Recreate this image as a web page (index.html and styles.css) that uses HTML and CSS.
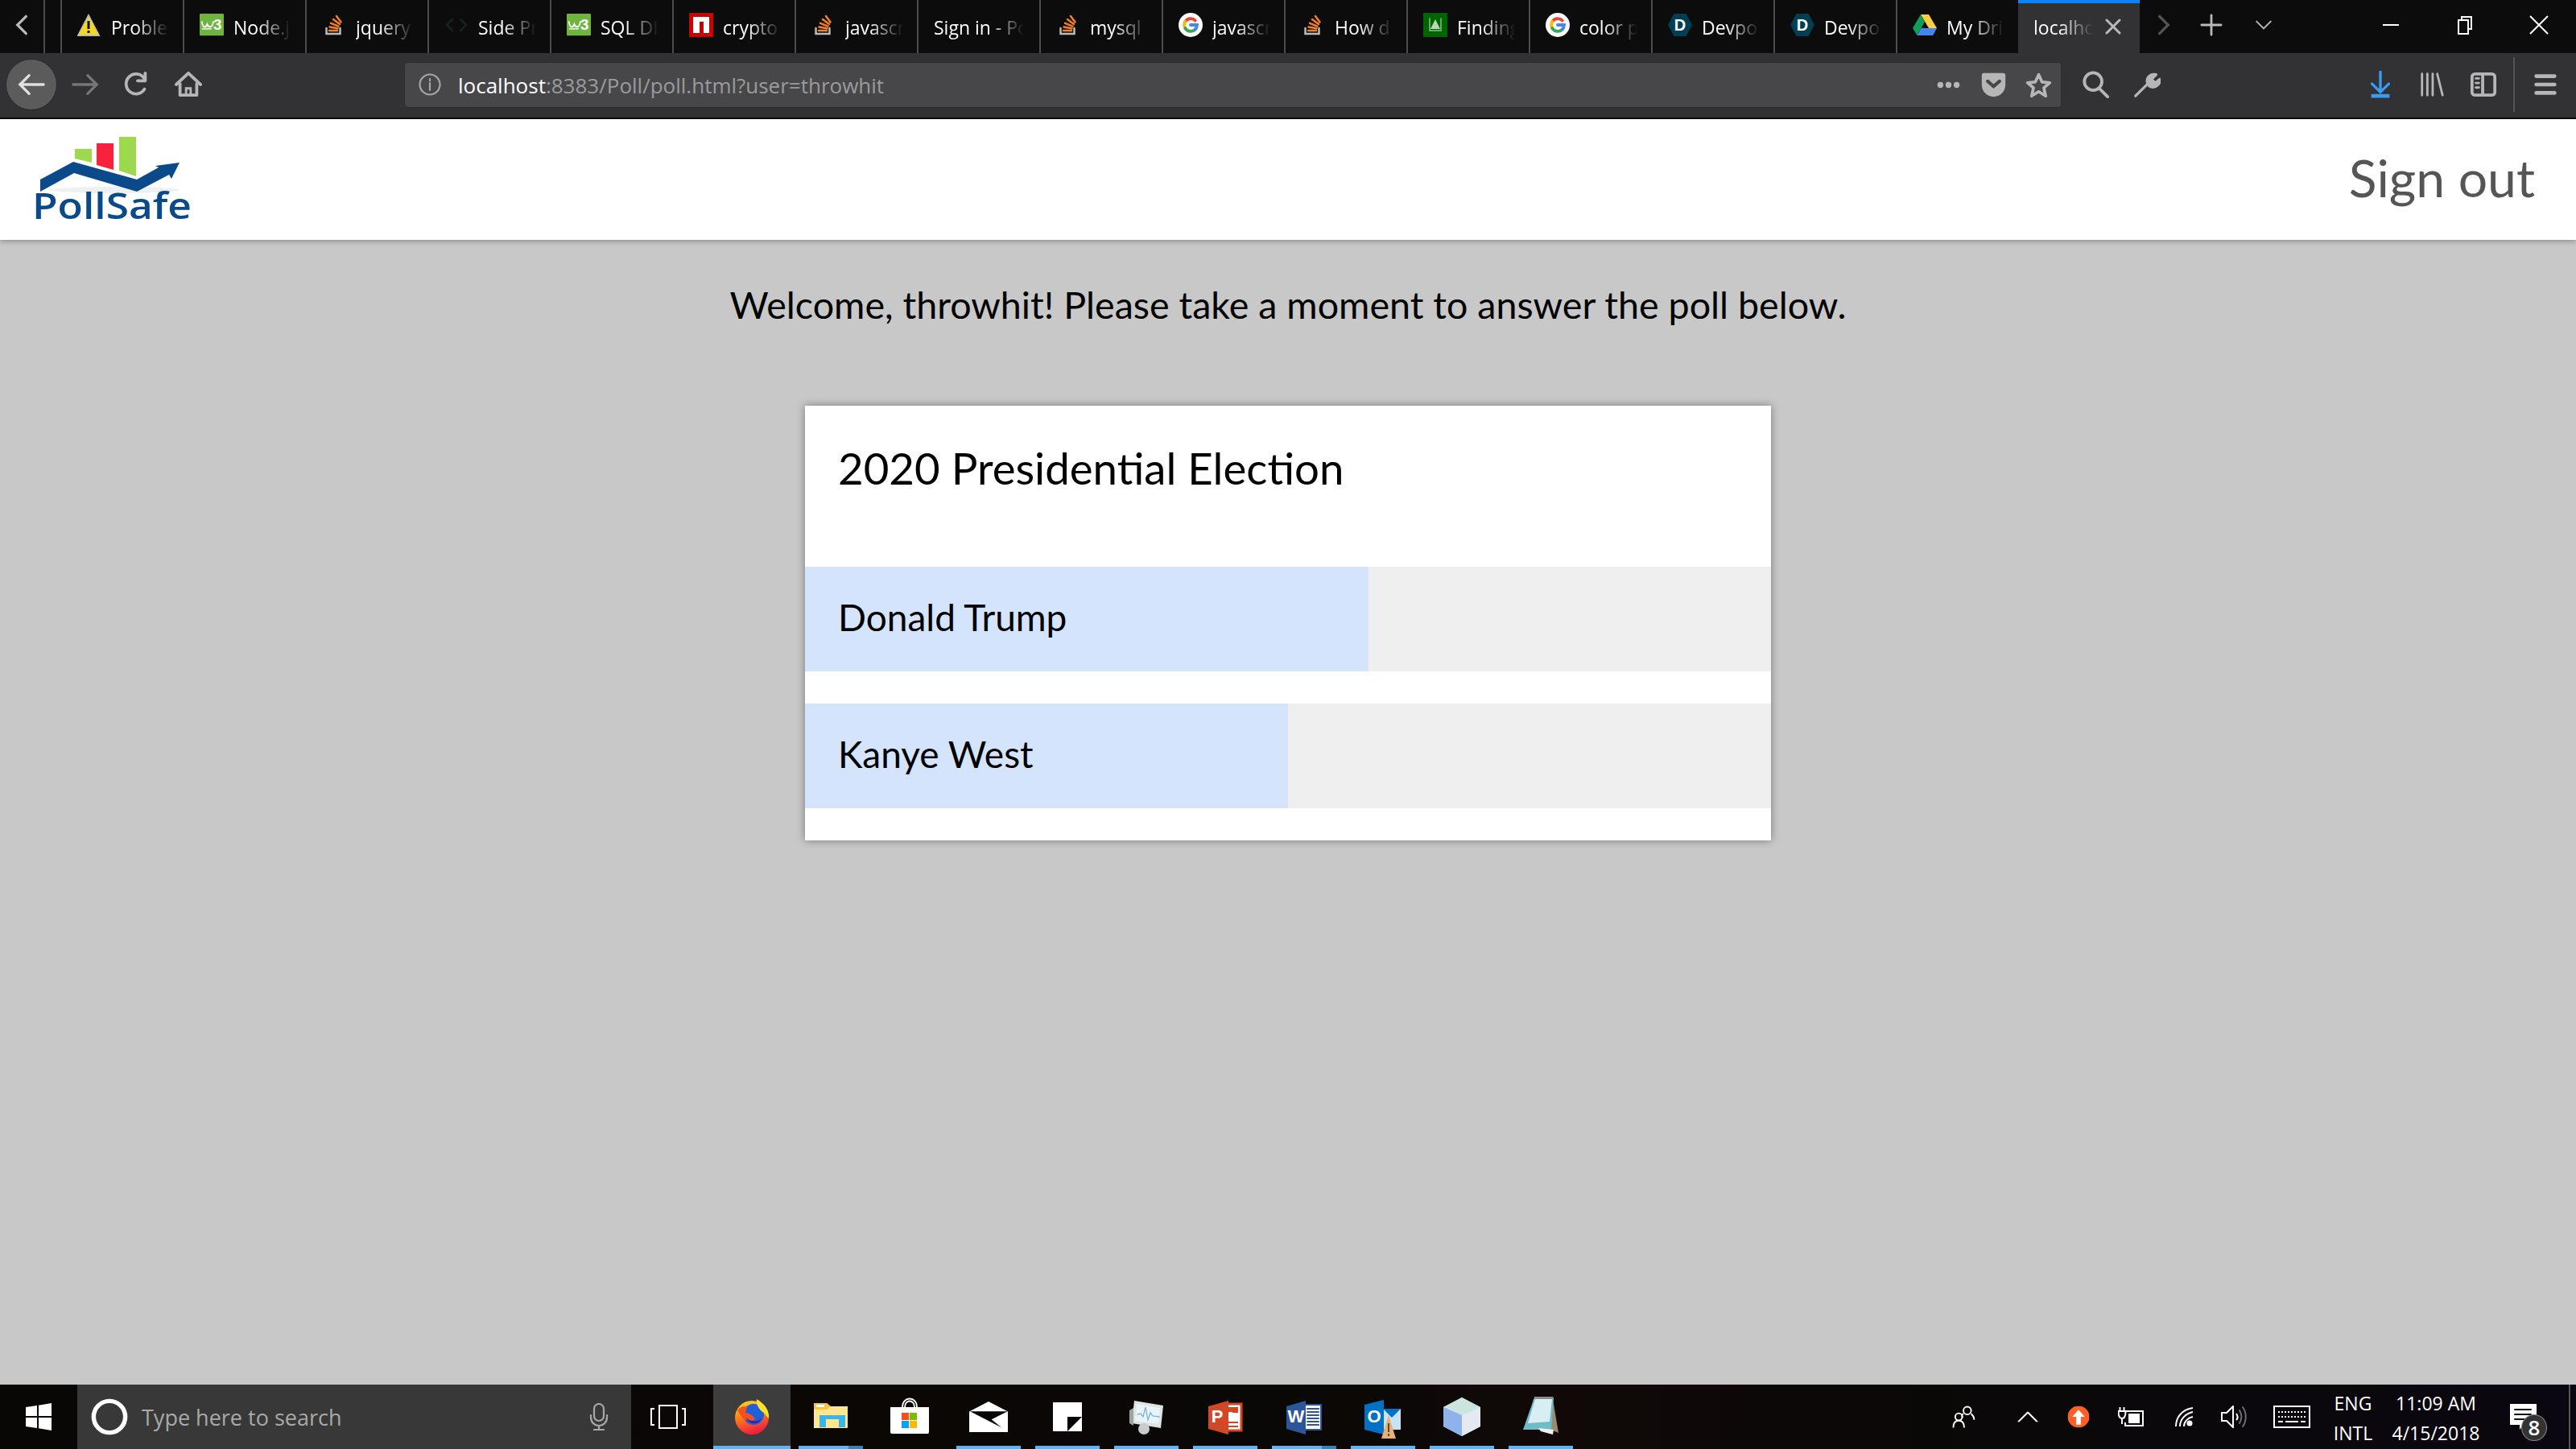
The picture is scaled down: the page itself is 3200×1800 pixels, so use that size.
FILE: index.html
```html
<!DOCTYPE html>
<html lang="en">
<head>
<meta charset="utf-8">
<title>PollSafe</title>
<link rel="stylesheet" href="styles.css">
</head>
<body>
<svg class="defs" width="0" height="0" aria-hidden="true">
  <symbol id="warn" viewBox="0 0 30 30"><path d="M14 1 28.500 29H-.5Z" fill="#bdbdb8"/><path d="M14 5 26 27H2Z" fill="#f6d91f"/><path d="M12.500 10h3v10h-3zM12.500 22h3v3h-3z" fill="#111"/></symbol>
  <symbol id="w3" viewBox="0 0 32 30"><rect width="32" height="29" rx="1" fill="#6fb43f"/><path d="M3 11c1 8 5 8 7 3 2 5 7 5 8-3" fill="none" stroke="#fff" stroke-width="2"/><text x="18" y="21" class="w3-num">3</text><path d="M4 20h12" stroke="#d8eccb" stroke-width="2" stroke-dasharray="1 1"/></symbol>
  <symbol id="so" viewBox="0 0 30 30"><path d="M5.500 19v7h17v-7" fill="none" stroke="#bcbbbb" stroke-width="2.500"/><path d="M9 22h10M9.500 17.500l10 1.700M11 12.800l9.500 3.800M14 8l8 6M18 4l5.500 7.500" fill="none" stroke="#f48024" stroke-width="2.500"/></symbol>
  <symbol id="code" viewBox="0 0 30 30"><path d="M10 8 3 15l7 7M20 8l7 7-7 7" fill="none" stroke="#142422" stroke-width="2.500"/></symbol>
  <symbol id="npm" viewBox="0 0 30 30"><rect width="30" height="30" fill="#cb0000"/><path d="M5 5h20v20h-7V11h-5v14H5Z" fill="#fff"/></symbol>
  <symbol id="goog" viewBox="0 0 30 30"><circle cx="15" cy="15" r="15" fill="#fff"/><g fill="none" stroke-width="3.800"><path d="M8.200 11A8 8 0 0 1 20.700 9.400" stroke="#ea4335"/><path d="M8.200 11a8 8 0 0 0 0 8" stroke="#fbbc05"/><path d="M8.200 19A8 8 0 0 0 20.700 20.600" stroke="#34a853"/><path d="M20.700 20.600A8 8 0 0 0 23 15H15" stroke="#4285f4"/></g></symbol>
  <symbol id="find" viewBox="0 0 30 30"><rect width="30" height="30" fill="#006400"/><path d="M15 8 21 20H9Z" fill="#b9d6b9"/><path d="M8 7v15h14V7" fill="none" stroke="#8cbc8c" stroke-width="1.500"/></symbol>
  <symbol id="dev" viewBox="0 0 30 30"><path d="M7.500 1h15L30 15l-7.500 14h-15L0 15Z" fill="#003e54"/><text x="15" y="22" class="dev-d">D</text></symbol>
  <symbol id="drive" viewBox="0 0 30 30"><path d="M10 2h10l10 17H20Z" fill="#ffcd40"/><path d="M10 2 15 11 5.500 28 0 19Z" fill="#0f9d58"/><path d="M10.500 19H30l-5 9H5.500Z" fill="#4285f4"/></symbol>
</svg>

<div class="page">
  <div class="tabbar">
    <div class="tab-back"><svg class="ic-tab" viewBox="0 0 20 28"><path d="M15 4 5 14l10 10" class="st-l"/></svg></div>
    <div class="tabs">
      <div class="tab"><svg class="fav"><use href="#warn"/></svg><span class="tab-label">Proble</span></div>
      <div class="tab"><svg class="fav"><use href="#w3"/></svg><span class="tab-label">Node.j</span></div>
      <div class="tab"><svg class="fav"><use href="#so"/></svg><span class="tab-label">jquery</span></div>
      <div class="tab"><svg class="fav"><use href="#code"/></svg><span class="tab-label">Side Pr</span></div>
      <div class="tab"><svg class="fav"><use href="#w3"/></svg><span class="tab-label">SQL DI</span></div>
      <div class="tab"><svg class="fav"><use href="#npm"/></svg><span class="tab-label">crypto</span></div>
      <div class="tab"><svg class="fav"><use href="#so"/></svg><span class="tab-label">javascr</span></div>
      <div class="tab"><span class="tab-label wide">Sign in - Po</span></div>
      <div class="tab"><svg class="fav"><use href="#so"/></svg><span class="tab-label">mysql</span></div>
      <div class="tab"><svg class="fav"><use href="#goog"/></svg><span class="tab-label">javascr</span></div>
      <div class="tab"><svg class="fav"><use href="#so"/></svg><span class="tab-label">How d</span></div>
      <div class="tab"><svg class="fav"><use href="#find"/></svg><span class="tab-label">Finding</span></div>
      <div class="tab"><svg class="fav"><use href="#goog"/></svg><span class="tab-label">color p</span></div>
      <div class="tab"><svg class="fav"><use href="#dev"/></svg><span class="tab-label">Devpo</span></div>
      <div class="tab"><svg class="fav"><use href="#dev"/></svg><span class="tab-label">Devpo</span></div>
      <div class="tab"><svg class="fav"><use href="#drive"/></svg><span class="tab-label">My Dri</span></div>
      <div class="tab tab-active"><span class="tab-label short">localho</span><svg class="tab-x" viewBox="0 0 20 20"><path d="M2 2l16 16M18 2 2 18" class="st-l"/></svg></div>
    </div>
    <div class="tab-tool"><svg class="ic-tab" viewBox="0 0 20 28"><path d="M5 4l10 10L5 24" class="st-dim"/></svg></div>
    <div class="tab-tool tab-tool-plus"><svg class="ic-plus" viewBox="0 0 30 30"><path d="M15 2v26M2 15h26" class="st-l"/></svg></div>
    <div class="tab-tool tab-tool-more"><svg class="ic-more" viewBox="0 0 20 20"><path d="M2 6l8 8 8-8" class="st-thin"/></svg></div>
    <div class="win-controls">
      <div class="win-btn"><svg class="ic-win" viewBox="0 0 24 24"><path d="M2 12h20" class="st-w"/></svg></div>
      <div class="win-btn"><svg class="ic-win" viewBox="0 0 24 24"><path d="M8 6V2h12v15h-4M4 6h12v17H4Z" class="st-w"/></svg></div>
      <div class="win-btn"><svg class="ic-win" viewBox="0 0 24 24"><path d="M1 1l22 22M23 1 1 23" class="st-w"/></svg></div>
    </div>
  </div>

  <div class="toolbar">
    <div class="tool tool-back"><svg class="ic" viewBox="0 0 36 36"><path d="M34 18H3M15 6 3 18l12 12" class="st-back"/></svg></div>
    <div class="tool"><svg class="ic" viewBox="0 0 36 36"><path d="M2 18h31M21 6l12 12-12 12" class="st-fwd"/></svg></div>
    <div class="tool"><svg class="ic" viewBox="0 0 36 36"><path d="M28 24A13 13 0 1 1 27 9M29 3v10H19" class="st-tb"/></svg></div>
    <div class="tool"><svg class="ic" viewBox="0 0 36 36"><path d="M2 18 18 3l16 15M7 17v15h22V17" class="st-tb"/><path d="M15 32v-9h6v9" class="st-tb-thin"/></svg></div>
    <div class="urlbar">
      <svg class="ic-info" viewBox="0 0 30 30"><circle cx="15" cy="15" r="12.500" class="st-info"/><path d="M15 13v9M15 8v2.500" class="st-info"/></svg>
      <div class="url"><span class="url-host">localhost</span>:8383/Poll/poll.html?user=throwhit</div>
      <div class="url-actions">
        <svg class="ic-url" viewBox="0 0 36 36"><circle cx="7" cy="18" r="4"/><circle cx="18" cy="18" r="4"/><circle cx="29" cy="18" r="4"/></svg>
        <svg class="ic-url" viewBox="0 0 36 36"><path d="M5 2h26a3 3 0 0 1 3 3v13a16 16 0 0 1-32 0V5a3 3 0 0 1 3-3Z"/><path d="M10 13l8 7 8-7" class="st-pocket"/></svg>
        <svg class="ic-url" viewBox="0 0 36 36"><path d="M18 4l4.500 10 10.500 1-8 7 2.500 11L18 27l-9.500 6L11 22l-8-7 10.500-1Z" class="st-tb"/></svg>
      </div>
    </div>
    <div class="tool"><svg class="ic" viewBox="0 0 36 36"><circle cx="15" cy="14" r="11.500" class="st-tb"/><path d="M23 23l11 11" class="st-tb"/></svg></div>
    <div class="tool"><svg class="ic" viewBox="0 0 36 36"><path d="M3 33 19 17M19 17c-3-7 3-14 11-12l-6 6 5 5 6-5c1 8-8 13-14 9" class="st-tb-wr"/></svg></div>
    <div class="tool-gap"></div>
    <div class="tool"><svg class="ic" viewBox="0 0 36 36"><path d="M18 1v26M7 17l11 11 11-11" class="st-blue"/><path d="M6 33h24" class="st-blue-thick"/></svg></div>
    <div class="tool"><svg class="ic" viewBox="0 0 36 36"><path d="M5 4v28M12 4v28M19 4v28M25 4l7 28" class="st-tb-thin2"/></svg></div>
    <div class="tool"><svg class="ic" viewBox="0 0 36 36"><rect x="3" y="4" width="30" height="28" rx="4" class="st-tb"/><path d="M17 4v28" class="st-tb"/><path d="M8 10h4M8 16h4M8 22h4" class="st-tb-thin"/></svg></div>
    <div class="tool-sep"></div>
    <div class="tool"><svg class="ic" viewBox="0 0 36 36"><path d="M6 7h24M6 18h24M6 29h24" class="st-menu"/></svg></div>
  </div>

  <header class="site-head">
    <svg class="logo" viewBox="0 148 250 150" role="img" aria-label="PollSafe">
      <path d="M93 185h21v17l-21-5Z" fill="#9dd84e"/>
      <path d="M120 178h21v33l-21-6Z" fill="#f7233c"/>
      <path d="M148 170h21v49l-21-7Z" fill="#9dd84e"/>
      <ellipse cx="143" cy="236" rx="80" ry="4" fill="#eef1f3"/>
      <path d="M50 223 91 201 170 223 197 208 193 206 223 202 213 222 210 217 170 238 92 215 50 238Z" fill="#0a4a8b"/>
      <text x="40" y="272" textLength="198" lengthAdjust="spacingAndGlyphs" class="logo-text">PollSafe</text>
    </svg>
    <a class="sign-out">Sign out</a>
  </header>

  <main class="content">
    <h1 class="welcome">Welcome, throwhit! Please take a moment to answer the poll below.</h1>
    <section class="poll-card">
      <h2 class="poll-title">2020 Presidential Election</h2>
      <div class="option"><div class="option-fill" style="width:700px">Donald Trump</div></div>
      <div class="option"><div class="option-fill" style="width:600px">Kanye West</div></div>
    </section>
  </main>

  <footer class="taskbar">
    <div class="start"><svg class="ic-start" viewBox="0 0 32 34"><path d="M0 5l14-2v13H0ZM16 2.700 32 0v16H16ZM0 18h14v13L0 29ZM16 18h16v16l-16-2.700Z" fill="#fff"/></svg></div>
    <div class="search">
      <svg class="ic-cortana" viewBox="0 0 44 44"><circle cx="22" cy="22" r="18" class="st-cortana"/></svg>
      <span class="search-text">Type here to search</span>
      <svg class="ic-mic" viewBox="0 0 24 34"><rect x="6" y="1" width="12" height="21" rx="6" class="st-mic"/><path d="M2 15v3a10 10 0 0 0 20 0v-3M12 28v5M6 33h12" class="st-mic"/></svg>
    </div>
    <div class="taskview"><svg class="ic-taskview" viewBox="0 0 44 30"><rect x="11" y="1" width="22" height="28" class="st-w"/><path d="M5 5H1V25h4M39 5h4V25h-4" class="st-w"/></svg></div>
    <div class="apps">
      <div class="app app-active"><svg class="app-ic" viewBox="0 0 60 60">
        <defs><linearGradient id="fxg" x1="0" y1="0" x2="0.300" y2="1"><stop offset="0" stop-color="#ffe226"/><stop offset=".45" stop-color="#ff8a16"/><stop offset="1" stop-color="#f0233c"/></linearGradient></defs>
        <circle cx="30" cy="31" r="21" fill="url(#fxg)"/><circle cx="32" cy="27" r="13" fill="#1f5fd8"/><path d="M12 22c5-6 9-5 12-4l-2 7c5 1 10 3 12 8-7 4-16 1-18-5Z" fill="#f4511e"/><path d="M36 8c10 6 16 14 15 24-3-2-5-7-9-9-4-4-7-9-6-15Z" fill="#ffe226"/><path d="M22 30c4 6 14 8 20 2-3 8-15 9-20-2Z" fill="#3b1e8f"/>
      </svg></div>
      <div class="app app-run app-multi"><svg class="app-ic" viewBox="0 0 60 60"><path d="M9 13h16l4 4h22v26a1 1 0 0 1-1 1H9Z" fill="#ffe792"/><path d="M9 13h16l5 4-5 4H9Z" fill="#f8c63d"/><rect x="12" y="15" width="10" height="3" fill="#fff"/><path d="M16 40V28h32v12h-8v-7H24v7Z" fill="#3cb4e7"/><path d="M24 33h16v7H24Z" fill="#ffe792"/><path d="M16 38h8v5h-8ZM40 38h8v5h-8Z" fill="#3cb4e7"/></svg></div>
      <div class="app"><svg class="app-ic" viewBox="0 0 60 60"><path d="M21 18c0-14 18-14 18 0M24 18c0-10 12-10 12 0" fill="none" stroke="#fff" stroke-width="1.800"/><path d="M6 18h48v31a2 2 0 0 1-2 2H8a2 2 0 0 1-2-2Z" fill="#fff"/><rect x="20" y="25" width="9" height="9" fill="#f25022"/><rect x="30" y="25" width="9" height="9" fill="#7fba00"/><rect x="20" y="35" width="9" height="9" fill="#00a4ef"/><rect x="30" y="35" width="9" height="9" fill="#ffb900"/></svg></div>
      <div class="app app-run"><svg class="app-ic" viewBox="0 0 60 60"><path d="M30 11 54 23.500V49H6V23.500Z" fill="#fff"/><path d="M7 23.300H53.700L33.700 33.300 46 43.300Z" fill="#050505"/></svg></div>
      <div class="app app-run"><svg class="app-ic" viewBox="0 0 60 60"><rect x="12" y="12" width="36" height="36" fill="#fff"/><path d="M30 30H48L30 48Z" fill="#050505"/></svg></div>
      <div class="app app-run"><svg class="app-ic" viewBox="0 0 60 60"><path d="M15 10 51 16 48 44 12 38Z" fill="#dfe3e4"/><path d="M18 14 47 19 45 39 16 35Z" fill="#e9f4f8"/><path d="M19 27l4-1 3 4 3-12 3 16 3-9 3 4 8 1" fill="none" stroke="#7ab4d8" stroke-width="1.300"/><path d="M9 22l5-3v22l-5-3Z" fill="#9ba3a3"/><circle cx="27" cy="45" r="7" fill="#c9ccce"/></svg></div>
      <div class="app app-run"><svg class="app-ic" viewBox="0 0 60 60"><path d="M29 14H50V47H29Z" fill="#fff" stroke="#d24726" stroke-width="3"/><path d="M33 18h13v7h-6a7 7 0 0 0-7 0ZM34 36h12v2H34ZM34 41h12v2H34Z" fill="#d24726"/><path d="M9 17 34 10V52L9 45Z" fill="#d24726"/><text x="20" y="37" class="app-letter">P</text></svg></div>
      <div class="app app-run app-multi"><svg class="app-ic" viewBox="0 0 60 60"><path d="M30 15H51V46H30Z" fill="#fff" stroke="#2b579a" stroke-width="2"/><path d="M34 20h14M34 24h14M34 28h14M34 32h14M34 36h14M34 40h14" stroke="#2b579a" stroke-width="2"/><path d="M8 17 32 10V52L8 45Z" fill="#2b579a"/><text x="20" y="37" class="app-letter">W</text></svg></div>
      <div class="app app-run"><svg class="app-ic" viewBox="0 0 60 60"><path d="M30 20H52V46H30Z" fill="#c8e3f6"/><path d="M30 20H52L41 31Z" fill="#0072c6"/><path d="M7 15 31 9V52L7 46Z" fill="#0072c6"/><text x="19" y="37" class="app-letter">O</text><path d="M37 28 46 57H28Z" fill="#e8b074"/><path d="M36 38h2v11h-2ZM36 51h2v3h-2Z" fill="#5e4b35"/></svg></div>
      <div class="app app-run"><svg class="app-ic" viewBox="0 0 60 60"><path d="M30 6 53 18V42L30 54 7 42V18Z" fill="#c0d7f0"/><path d="M30 6 53 18 30 28 7 18Z" fill="#cbe4df"/><path d="M7 18 30 28V54L7 42Z" fill="#8fb2ea"/><path d="M53 18 30 28V54L53 42Z" fill="#e3eaf1"/></svg></div>
      <div class="app app-run"><svg class="app-ic" viewBox="0 0 60 60"><path d="M21 8H45L52 50 38 44H12Z" fill="#9a8a6c"/><path d="M22 6H46L43 46H8Z" fill="#6fbcc9"/><path d="M23 8H44L41 36 14 38Z" fill="#d9eef2"/><path d="M27 44 46 46 45 52 30 48Z" fill="#f2f2f2"/><path d="M22 5h23v3H22Z" fill="#8a8a8a"/></svg></div>
    </div>
    <div class="tray">
      <svg class="tray-ic ic-people" viewBox="0 0 30 30"><circle cx="20" cy="7" r="5" class="st-tray"/><circle cx="9" cy="15" r="4.500" class="st-tray"/><path d="M15 11c-2 1-2 3-1 5M25 11c2 2 4 4 4 8M2 29c0-5 2-9 7-9s7 4 7 9" class="st-tray"/></svg>
      <svg class="tray-ic ic-chev" viewBox="0 0 26 13"><path d="M1 13 13 1l12 12" class="st-tray"/></svg>
      <svg class="tray-ic ic-up" viewBox="0 0 28 28"><circle cx="14" cy="14" r="14" fill="#ff6125"/><path d="M14 5 22 14H17V24H11V14H6Z" fill="#fff"/></svg>
      <svg class="tray-ic ic-batt" viewBox="0 0 32 24"><path d="M10 5h21v18H9v-4" class="st-tray"/><rect x="13" y="8" width="14" height="12" fill="#fff"/><path d="M2.500 0v5M7.500 0v5M.5 5h9c0 5-1 9-4.500 9S.5 10 .5 5ZM5 14v7" class="st-tray"/></svg>
      <svg class="tray-ic ic-wifi" viewBox="0 0 24 24"><path d="M1 24C1 12 9 3 22 1M6 24C6 15 13 8 22 6M11 24C11 18 16 13 22 12" class="st-tray"/><circle cx="18" cy="20" r="3.500" fill="#fff"/></svg>
      <svg class="tray-ic ic-sound" viewBox="0 0 32 28"><path d="M1 9h6l8-8v26l-8-8H1Z" class="st-tray"/><path d="M19 10c2 3 2 6 0 8" class="st-tray"/><path d="M23 6c3 5 3 11 0 16" class="st-tray-dim"/><path d="M27 2c5 7 5 17 0 24" class="st-tray-dim"/></svg>
      <svg class="tray-ic ic-kbd" viewBox="0 0 46 28"><rect x="1" y="1" width="44" height="26" class="st-tray"/><path d="M6 8h34M6 14h34" class="st-tray-dot"/><path d="M6 20h6M15 20h16M34 20h6" class="st-tray"/></svg>
      <div class="tray-lang"><span>ENG</span><span>INTL</span></div>
      <div class="tray-clock"><span>11:09 AM</span><span>4/15/2018</span></div>
      <div class="action-center">
        <svg class="ic-action" viewBox="0 0 34 32"><path d="M0 0H33V26H16L12 32V26H0Z" fill="#fff"/><path d="M6 7h20M6 13h20M6 19h14" stroke="#111" stroke-width="2"/></svg>
        <span class="action-badge">8</span>
      </div>
      <div class="show-desktop"></div>
    </div>
  </footer>
</div>
</body>
</html>
```

FILE: styles.css
```css
* { box-sizing: border-box; }
html, body { margin: 0; padding: 0; height: 100%; }
body { font-family: "Lato", "Liberation Sans", sans-serif; overflow: hidden; }
.defs { display: none; }
.page { display: flex; flex-direction: column; height: 1800px; width: 3200px; }

/* Stroke helpers */
svg path, svg circle, svg rect { stroke-linecap: round; }
.st-l { fill: none; stroke: #b9b9b9; stroke-width: 3; }
.st-dim { fill: none; stroke: #555; stroke-width: 3; }
.st-thin { fill: none; stroke: #b9b9b9; stroke-width: 1.800; }
.st-w { fill: none; stroke: #fff; stroke-width: 2; stroke-linecap: butt; }
.st-back { fill: none; stroke: #e0e0e0; stroke-width: 3.500; }
.st-fwd { fill: none; stroke: #767677; stroke-width: 3.500; }
.st-tb { fill: none; stroke: #b6b6b7; stroke-width: 4; stroke-linejoin: round; }
.st-tb-thin { fill: none; stroke: #b6b6b7; stroke-width: 3; }
.st-tb-thin2 { fill: none; stroke: #b6b6b7; stroke-width: 3; }
.st-tb-wr { fill: #b6b6b7; stroke: #b6b6b7; stroke-width: 3.500; stroke-linejoin: round; }
.st-menu { fill: none; stroke: #b6b6b7; stroke-width: 5; }
.st-info { fill: none; stroke: #a5a5a6; stroke-width: 2.200; }
.st-pocket { fill: none; stroke: #474749; stroke-width: 4.500; }
.st-blue { fill: none; stroke: #3a9bf5; stroke-width: 3.500; }
.st-blue-thick { fill: none; stroke: #3a9bf5; stroke-width: 5; stroke-linecap: butt; }
.st-cortana { fill: none; stroke: #fff; stroke-width: 5; }
.st-mic { fill: none; stroke: #a8a8a8; stroke-width: 2.200; }
.st-tray { fill: none; stroke: #fff; stroke-width: 2; stroke-linecap: butt; }
.st-tray-dim { fill: none; stroke: #6d6d6d; stroke-width: 2; }
.st-tray-dot { fill: none; stroke: #fff; stroke-width: 2; stroke-dasharray: 2 2; stroke-linecap: butt; }

.w3-num { font: bold 20px "Liberation Sans", sans-serif; fill: #fff; }
.dev-d { font: bold 20px "Liberation Sans", sans-serif; fill: #fff; text-anchor: middle; }

/* Tab strip */
.tabbar { display: flex; height: 66px; flex: none; background: #0c0c0c; font-family: "Open Sans", sans-serif; font-size: 23px; color: #fff; }
.tab-back { width: 56px; border-right: 2px solid #4c4c4c; display: flex; align-items: center; justify-content: center; padding-bottom: 4px; }
.ic-tab { width: 22px; height: 30px; }
.tabs { display: flex; margin-left: 19px; flex: none; }
.tab { width: 152px; border-left: 2px solid #4c4c4c; display: flex; align-items: center; gap: 12px; padding-left: 19px; }
.fav { width: 30px; height: 30px; flex: none; margin-bottom: 4px; }
.tab-label { flex: none; white-space: nowrap; padding-top: 1px; -webkit-mask-image: linear-gradient(90deg, #000 30px, transparent 72px); mask-image: linear-gradient(90deg, #000 30px, transparent 72px); }
.tab-label.wide { -webkit-mask-image: linear-gradient(90deg, #000 70px, transparent 112px); mask-image: linear-gradient(90deg, #000 70px, transparent 112px); }
.tab-active { width: 151px; border-left: 0; background: #323234; border-top: 4px solid #0a84ff; padding: 0 0 4px 19px; gap: 0; justify-content: space-between; padding-right: 23px; }
.tab-label.short { -webkit-mask-image: linear-gradient(90deg, #000 32px, transparent 74px); mask-image: linear-gradient(90deg, #000 32px, transparent 74px); }
.tab-x { width: 20px; height: 20px; flex: none; }
.tab-tool { width: 60px; display: flex; align-items: center; justify-content: center; padding-bottom: 4px; }
.tab-tool-plus { width: 58px; }
.tab-tool-more { width: 72px; }
.ic-plus { width: 28px; height: 28px; }
.ic-more { width: 22px; height: 22px; }
.win-controls { display: flex; margin-left: auto; }
.win-btn { width: 92px; display: flex; align-items: center; justify-content: center; padding-bottom: 4px; }
.ic-win { width: 24px; height: 24px; }

/* Toolbar */
.toolbar { display: flex; align-items: center; flex: none; height: 82px; padding: 0 6px 2px 7px; background: #323234; border-bottom: 2px solid #0c0c0c; }
.tool { width: 64px; height: 64px; display: flex; align-items: center; justify-content: center; flex: none; }
.tool-back { background: #5b5b5c; border-radius: 50%; border: 1px solid #2a2a2c; margin-right: 3px; }
.ic { width: 34px; height: 34px; }
.urlbar { flex: 1; display: flex; align-items: center; height: 57px; margin: 0 10px 0 236px; padding: 0 11px 0 16px; background: #474749; border: 1px solid #2c2c2e; border-radius: 4px; }
.ic-info { width: 30px; height: 30px; flex: none; }
.url { flex: 1; margin-left: 20px; padding-top: 2px; font-family: "Open Sans", sans-serif; font-size: 26px; color: #9b9b9c; white-space: nowrap; }
.url-host { color: #fff; }
.url-actions { display: flex; align-items: center; gap: 23px; }
.ic-url { width: 33px; height: 33px; fill: #b6b6b7; }
.tool-gap { width: 226px; flex: none; }
.tool-sep { width: 2px; height: 68px; background: #555; margin: 0 6px 0 5px; flex: none; }

/* Site header */
.site-head { display: flex; align-items: center; justify-content: space-between; flex: none; height: 150px; padding-right: 51px; background: #fff; box-shadow: 0 2px 6px rgba(0, 0, 0, .3); position: relative; }
.logo { width: 250px; height: 150px; filter: blur(.6px); }
.logo-text { font: 600 46px "Open Sans", sans-serif; fill: #0a4a8b; }
.sign-out { font-size: 64.300px; color: #555; padding-bottom: 6px; }

/* Poll */
.content { flex: 1; display: flex; flex-direction: column; align-items: center; background: #c8c8c8; }
.welcome { margin: 45px 0 0; height: 161px; font-size: 46.600px; font-weight: 400; line-height: 70px; color: #000; }
.poll-card { width: 1200px; padding-bottom: 40px; background: #fff; box-shadow: 0 0 10px rgba(0, 0, 0, .4); }
.poll-title { margin: 0; height: 200px; padding: 42px 0 0 41px; font-size: 54.600px; font-weight: 400; line-height: 70px; color: #000; }
.option { height: 130px; background: #efefef; }
.option + .option { margin-top: 40px; }
.option-fill { height: 100%; display: flex; align-items: center; padding: 0 0 6px 41px; background: #d4e4fc; font-size: 46px; color: #000; }

/* Taskbar */
.taskbar { display: flex; flex: none; height: 80px; color: #fff; background: linear-gradient(90deg, #090606 0, #0a0705 35%, #0a0806 50%, #100908 60%, #0a0807 75%, #0a0710 100%); font-family: "Open Sans", sans-serif; }
.start { width: 96px; display: flex; align-items: center; justify-content: center; }
.ic-start { width: 32px; height: 34px; }
.search { width: 688px; display: flex; align-items: center; background: #383838; padding: 0 28px 0 16px; }
.ic-cortana { width: 48px; height: 48px; flex: none; }
.search-text { flex: 1; margin-left: 16px; font-size: 27px; color: #a9a9a9; }
.ic-mic { width: 24px; height: 34px; }
.taskview { width: 102px; display: flex; align-items: center; justify-content: center; padding-right: 10px; }
.ic-taskview { width: 44px; height: 30px; }
.apps { display: flex; gap: 2px; }
.app { width: 96px; display: flex; align-items: center; justify-content: center; position: relative; }
.app-ic { width: 60px; height: 60px; }
.app-letter { font: bold 22px "Liberation Sans", sans-serif; fill: #fff; text-anchor: middle; }
.app-active { background: #3d3d3d; }
.app-active::after, .app-run::after { content: ""; position: absolute; bottom: 0; height: 4px; background: #64b1ee; }
.app-active::after { left: 0; right: 0; }
.app-run::after { left: 8px; right: 8px; }
.app-multi::after { right: 8px; background: linear-gradient(90deg, #64b1ee 0, #64b1ee 78%, #3f7fb0 78%); }

.tray { flex: 1; display: flex; align-items: center; position: relative; height: 80px; }
.tray-ic { flex: none; position: absolute; top: 50%; transform: translate(-50%, -50%); }
.ic-people { left: 477px; width: 29px; height: 29px; }
.ic-chev { left: 557px; width: 26px; height: 13px; }
.ic-up { left: 620px; width: 27px; height: 27px; }
.ic-batt { left: 685px; width: 32px; height: 24px; }
.ic-wifi { left: 752px; width: 24px; height: 24px; }
.ic-sound { left: 813px; width: 32px; height: 28px; }
.ic-kbd { left: 885px; width: 46px; height: 28px; }
.tray-lang, .tray-clock { position: absolute; top: 5px; display: flex; flex-direction: column; align-items: center; transform: translateX(-50%); font-size: 23px; line-height: 37px; white-space: nowrap; }
.tray-lang { left: 961px; }
.tray-clock { left: 1064px; }
.action-center { position: absolute; left: 1156px; top: 24px; width: 34px; height: 32px; }
.ic-action { display: block; width: 34px; height: 32px; }
.action-badge { position: absolute; left: 14px; top: 13px; width: 32px; height: 33px; border-radius: 50%; background: #333; border: 1px solid #888; font-size: 26px; font-weight: 600; line-height: 31px; text-align: center; }
.show-desktop { position: absolute; left: 1229px; top: 0; bottom: 0; width: 2px; background: #555; }
```
